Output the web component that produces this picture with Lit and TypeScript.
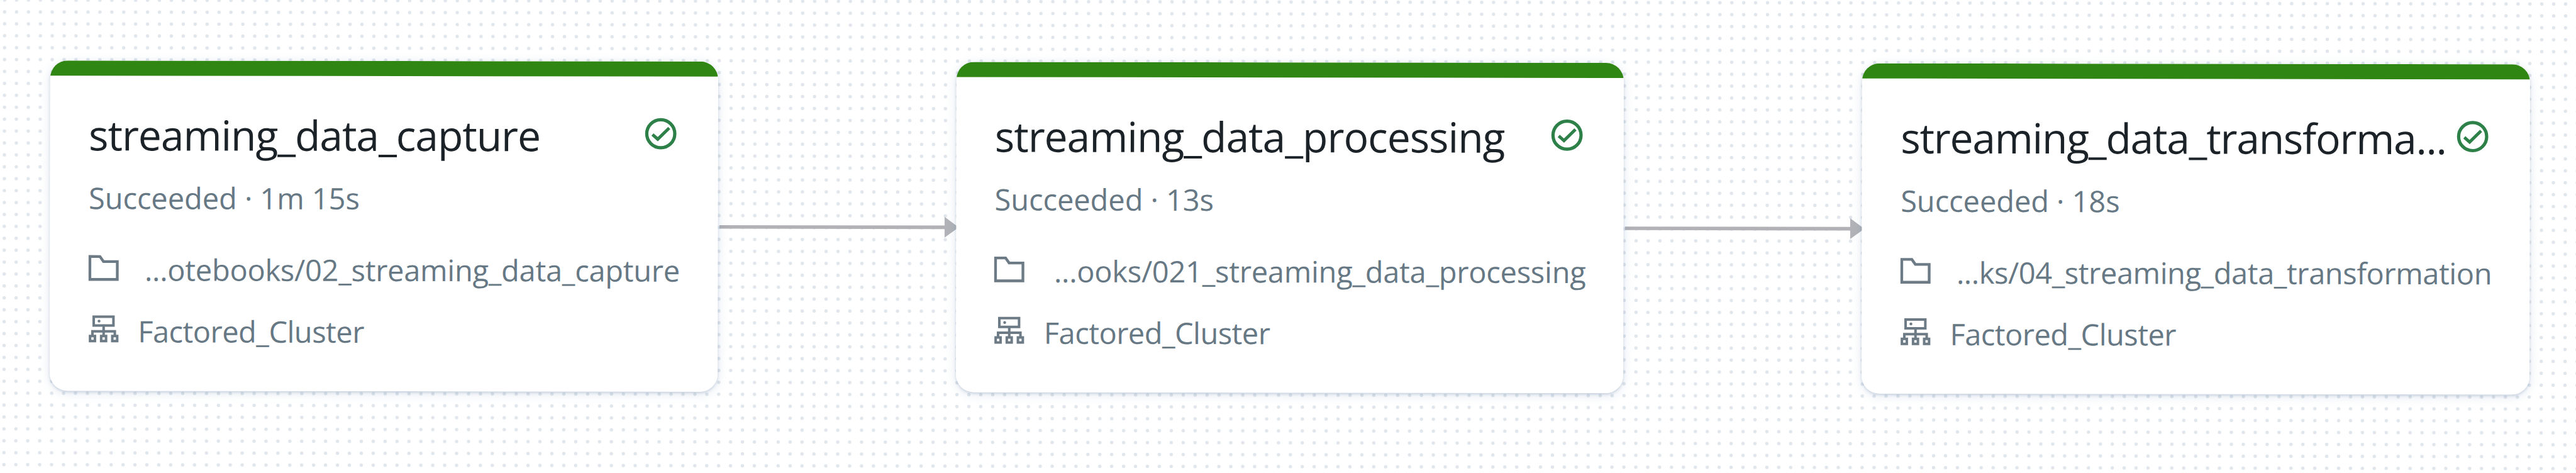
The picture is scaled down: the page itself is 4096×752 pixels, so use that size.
import { LitElement, html, svg, css } from "lit";
import { customElement, property } from "lit/decorators.js";

interface Task {
  title: string;
  duration: string;
  path: string;
  titleTracking: number;
  pathTracking: number;
}

const TASKS: Task[] = [
  { title: "streaming_data_capture", duration: "1m 15s", path: "...otebooks/02_streaming_data_capture", titleTracking: -1.08, pathTracking: -0.26 },
  { title: "streaming_data_processing", duration: "13s", path: "...ooks/021_streaming_data_processing", titleTracking: -1.03, pathTracking: -0.25 },
  { title: "streaming_data_transforma...", duration: "18s", path: "...ks/04_streaming_data_transformation", titleTracking: -1.26, pathTracking: -0.42 },
];

@customElement("task-card")
class TaskCard extends LitElement {
  @property({ attribute: false }) task!: Task;

  static styles = css`
    :host {
      display: block;
      position: relative;
      flex: none;
      box-sizing: border-box;
      width: 1061.6px;
      height: 525.6px;
      border-radius: 28px;
      background: #fff;
      overflow: hidden;
      font-family: "Open Sans", "Noto Sans", sans-serif;
      font-size: 47px;
      line-height: 70px;
      color: #677885;
    }
    .bar {
      height: 24px;
      background: #308613;
    }
    .body {
      padding: 45.4px 60px 0 61.5px;
    }
    .head {
      display: flex;
      justify-content: space-between;
      height: 96px;
      line-height: 96px;
    }
    .title {
      font-size: 66px;
      color: #1b2228;
      white-space: nowrap;
    }
    .check {
      flex: none;
      width: 56px;
      height: 56px;
      margin: 17.8px 2.6px 0 0;
    }
    .status {
      margin-top: 18px;
      letter-spacing: -0.06px;
      white-space: nowrap;
    }
    .row {
      display: flex;
      align-items: flex-start;
      height: 70px;
      white-space: nowrap;
    }
    .row.source {
      margin-top: 43.5px;
      justify-content: space-between;
    }
    .row.cluster {
      margin-top: 28.5px;
      gap: 23px;
      letter-spacing: -0.52px;
    }
    .icon {
      flex: none;
      width: 56.6px;
      height: 56.6px;
      margin-left: -1px;
    }
    .source .icon {
      margin-top: 7px;
    }
    .cluster .icon {
      margin-top: 7px;
    }
  `;

  render() {
    const t = this.task;
    return html`
      <div class="bar"></div>
      <div class="body">
        <div class="head">
          <span class="title" style="letter-spacing:${t.titleTracking}px">${t.title}</span>
          <svg class="check" viewBox="0 0 56 56" fill="none" stroke="#2e8049">
            <circle cx="28" cy="28" r="22.3" stroke-width="5.2" />
            <path d="M14.8 29.2 L23.2 36.6 L41.4 18.8" stroke-width="5" />
          </svg>
        </div>
        <div class="status">Succeeded · ${t.duration}</div>
        <div class="row source">
          <svg class="icon" viewBox="0 0 56.6 56.6" fill="none" stroke="#6d7b86" stroke-width="4.4">
            <path d="M2.6 7.6 H18.6 L24.2 15.6 H46.2 V44 H2.6 Z" />
          </svg>
          <span style="letter-spacing:${t.pathTracking}px">${t.path}</span>
        </div>
        <div class="row cluster">
          <svg class="icon" viewBox="0 0 56.6 56.6" fill="none" stroke="#6d7b86" stroke-width="4">
            <path d="M8.8 5.2 H40.2 V19.2 H8.8 Z" />
            <path d="M24.6 19.2 V35.6 M6.8 35.6 V28.4 H42.4 V35.6" />
            <path d="M3 36 H10.8 V44 H3 Z M20.7 36 H28.5 V44 H20.7 Z M38.4 36 H46.2 V44 H38.4 Z" />
            <circle cx="17.3" cy="12.2" r="2.3" fill="#6d7b86" stroke="none" />
          </svg>
          <span>Factored_Cluster</span>
        </div>
      </div>
    `;
  }
}

@customElement("app-root")
class AppRoot extends LitElement {
  static styles = css`
    :host {
      display: block;
      position: relative;
      width: 4096px;
      height: 752px;
      overflow: hidden;
      background: #fff;
    }
    .dots {
      position: absolute;
      inset: 0;
      width: 100%;
      height: 100%;
    }
    /* The canvas carries a very slight clockwise tilt. */
    .graph {
      position: relative;
      display: flex;
      align-items: center;
      width: 3943px;
      padding: 95.9px 0 0 80px;
      transform: rotate(0.09deg);
      transform-origin: 0 0;
    }
    .node {
      position: relative;
      z-index: 1;
      border-radius: 28px;
      box-shadow: 0 2px 4px rgba(60, 95, 140, 0.2), 0 3px 16px rgba(70, 110, 160, 0.18);
    }
    .edge {
      flex: none;
      width: 379px;
      height: 40px;
      overflow: visible;
    }
  `;

  render() {
    return html`
      <svg class="dots">
        <defs>
          <pattern id="grid" width="18.94" height="18.94" patternUnits="userSpaceOnUse"
            patternTransform="rotate(0.09) translate(-2.07 -9.47)">
            <circle cx="9.47" cy="9.47" r="2.7" fill="#e0e6ec" />
          </pattern>
        </defs>
        <rect width="4096" height="752" fill="url(#grid)" />
      </svg>
      <div class="graph">
        ${TASKS.map(
          (task, i) => html`
            ${i
              ? html`<svg class="edge" viewBox="0 0 379 40">
                  ${svg`<path d="M2.5 20 H362" stroke="#b1b1b6" stroke-width="5.6" fill="none"/>
                  <path d="M360.5 3.5 L383 20 L360.5 36.5 Z" fill="#b1b3b8"/>`}
                </svg>`
              : null}
            <div class="node"><task-card .task=${task}></task-card></div>
          `
        )}
      </div>
    `;
  }
}
